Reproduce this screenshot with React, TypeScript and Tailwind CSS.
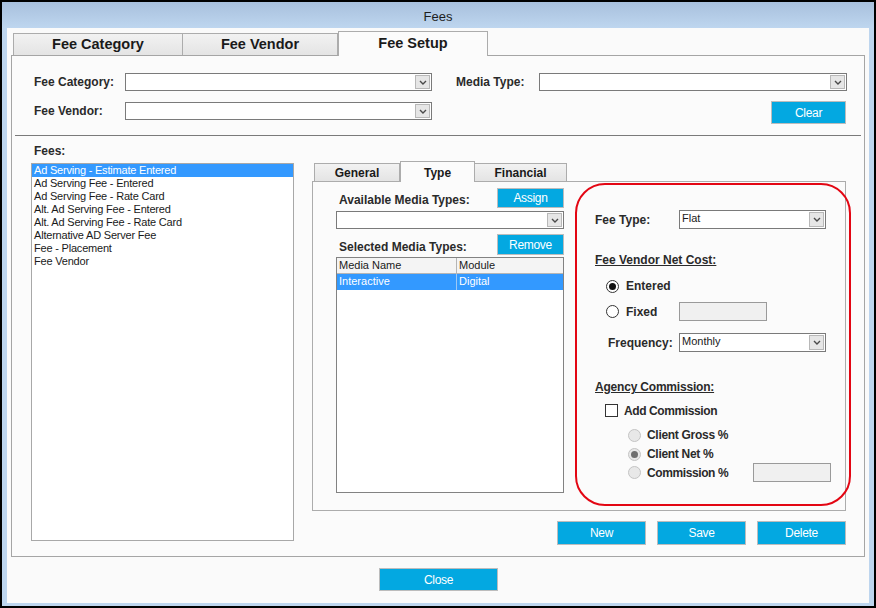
import React from 'react';

const FONT = "font-['Liberation_Sans',Arial,sans-serif]";

function Chevron() {
  return (
    <svg width="8" height="5" viewBox="0 0 8 5">
      <path d="M1 1 L4 4 L7 1" fill="none" stroke="#4a4a4a" strokeWidth="1.4" />
    </svg>
  );
}

function Select({ width, value, height = 18 }: { width: number; value?: string; height?: number }) {
  return (
    <div
      className="flex shrink-0 border border-[#7a7a7a] bg-white"
      style={{ width, height }}
    >
      <span className="flex-1 truncate pl-[2px] text-[11px] leading-[15px] text-[#1a1a1a]">{value}</span>
      <div className="m-px flex w-[15px] items-center justify-center border border-[#b8b8b8] bg-[#e6e6e6]">
        <Chevron />
      </div>
    </div>
  );
}

function BlueButton({ label, width, height }: { label: string; width: number; height: number }) {
  return (
    <div
      className="flex shrink-0 items-center justify-center border border-[#bcbcbc] bg-[#03a8e1] text-[12px] tracking-[-0.3px] text-white"
      style={{ width, height }}
    >
      {label}
    </div>
  );
}

function Radio({ checked, disabled }: { checked?: boolean; disabled?: boolean }) {
  return (
    <div
      className={
        'flex h-[13px] w-[13px] shrink-0 items-center justify-center rounded-full border ' +
        (disabled ? 'border-[#c4c4c4] bg-[#e8e8e8]' : 'border-[#333] bg-white')
      }
    >
      {checked && (
        <div className={'h-[7px] w-[7px] rounded-full ' + (disabled ? 'bg-[#6f6f6f]' : 'bg-[#111]')} />
      )}
    </div>
  );
}

const fees = [
  'Ad Serving - Estimate Entered',
  'Ad Serving Fee - Entered',
  'Ad Serving Fee - Rate Card',
  'Alt. Ad Serving Fee - Entered',
  'Alt. Ad Serving Fee - Rate Card',
  'Alternative AD Server Fee',
  'Fee - Placement',
  'Fee Vendor',
];

const label = 'text-[12px] font-bold leading-[14px] text-[#2a2a2a]';

export default function App() {
  return (
    <div className={`h-[608px] w-[876px] bg-black p-[2px] ${FONT}`}>
      <div className="flex h-full flex-col bg-[#bdd5ee]">
        {/* Title bar */}
        <div className="flex h-[26px] shrink-0 items-center justify-center bg-gradient-to-b from-[#a8c0dd] to-[#bed6ef] pt-[4px] text-[13px] text-[#1e1e1e]">
          Fees
        </div>

        {/* Client area */}
        <div className="mx-[5px] flex h-[575px] flex-col bg-[#fafafa] px-[4px] pt-[3px]">
          {/* Outer tabs */}
          <div className="ml-[2px] flex h-[24px] items-end">
            <div className="flex h-[22px] w-[170px] items-center justify-center border border-b-0 border-[#acacac] bg-gradient-to-b from-[#f2f2f2] to-[#e4e4e4] pt-px text-[14.5px] font-bold text-[#1a1a1a]">
              Fee Category
            </div>
            <div className="flex h-[22px] w-[155px] items-center justify-center border border-b-0 border-l-0 border-[#acacac] bg-gradient-to-b from-[#f2f2f2] to-[#e4e4e4] pt-px text-[14.5px] font-bold text-[#1a1a1a]">
              Fee Vendor
            </div>
            <div className="relative z-10 -mb-px flex h-[25px] w-[150px] items-start justify-center border border-b-0 border-[#acacac] bg-[#fbfbfb] pt-[1px] text-[14.5px] font-bold text-[#1a1a1a]">
              Fee Setup
            </div>
          </div>

          {/* Outer tab page */}
          <div className="flex h-[502px] shrink-0 flex-col border border-[#a5a5a5] bg-[#fbfbfb]">
            <div className="mt-[17px] flex h-[18px] items-center pl-[22px]">
              <span className={`${label} w-[91px]`}>Fee Category:</span>
              <Select width={307} />
              <span className={`${label} ml-[24px] w-[83px]`}>Media Type:</span>
              <Select width={308} />
            </div>
            <div className="mt-[11px] flex h-[18px] items-start pl-[22px] pr-[18px]">
              <span className={`${label} mt-[2px] w-[91px]`}>Fee Vendor:</span>
              <Select width={307} />
              <div className="ml-auto -mt-px">
                <BlueButton label="Clear" width={75} height={23} />
              </div>
            </div>
            <div className="mx-[3px] mt-[15px] h-px bg-[#7a7a7a]" />

            <div className="flex">
              {/* Fees list */}
              <div className="ml-[19px] flex w-[263px] shrink-0 flex-col">
                <span className={`${label} mt-[8px] pl-[3px]`}>Fees:</span>
                <div className="mt-[5px] h-[378px] border border-[#a8a8a8] bg-white">
                  {fees.map((f, i) => (
                    <div
                      key={f}
                      className={
                        'h-[13px] pl-[2px] text-[11px] leading-[13px] tracking-[-0.2px] ' +
                        (i === 0 ? 'bg-[#3399ff] text-white' : 'text-[#1a1a1a]')
                      }
                    >
                      {f}
                    </div>
                  ))}
                </div>
              </div>

              {/* Right side */}
              <div className="ml-[18px] mt-[25px] flex w-[534px] shrink-0 flex-col">
                <div className="ml-[2px] flex h-[20px] items-end">
                  <div className="flex h-[18px] w-[86px] items-center justify-center border border-b-0 border-[#acacac] bg-gradient-to-b from-[#f2f2f2] to-[#e4e4e4] text-[12px] font-bold text-[#1a1a1a]">
                    General
                  </div>
                  <div className="relative z-10 -mb-px flex h-[21px] w-[75px] items-start justify-center border border-b-0 border-[#acacac] bg-[#fbfbfb] pt-[2px] text-[12px] font-bold text-[#1a1a1a]">
                    Type
                  </div>
                  <div className="flex h-[18px] w-[92px] items-center justify-center border border-b-0 border-l-0 border-[#acacac] bg-gradient-to-b from-[#f2f2f2] to-[#e4e4e4] text-[12px] font-bold text-[#1a1a1a]">
                    Financial
                  </div>
                </div>

                {/* Inner tab page */}
                <div className="flex h-[330px] border border-[#acacac] bg-[#fbfbfb]">
                  <div className="ml-[23px] mt-[6px] flex w-[228px] shrink-0 flex-col">
                    <div className="flex h-[20px] items-end justify-between">
                      <span className={`${label} pb-[1px] pl-[3px]`}>Available Media Types:</span>
                      <BlueButton label="Assign" width={67} height={20} />
                    </div>
                    <div className="mt-[3px]">
                      <Select width={228} />
                    </div>
                    <div className="mt-[5px] flex h-[21px] items-end justify-between">
                      <span className={`${label} pb-px pl-[3px]`}>Selected Media Types:</span>
                      <BlueButton label="Remove" width={67} height={21} />
                    </div>
                    <div className="mt-[2px] h-[236px] border border-[#828282] bg-white">
                      <div className="flex h-[16px] border-b border-[#b5b5b5] bg-[#f4f4f4] text-[11px] leading-[15px] text-[#1a1a1a]">
                        <span className="w-[120px] border-r border-[#b5b5b5] pl-[2px]">Media Name</span>
                        <span className="pl-[2px]">Module</span>
                      </div>
                      <div className="flex h-[16px] bg-[#3399ff] text-[11px] leading-[15px] text-white">
                        <span className="w-[120px] border-r border-[#9cc9f5] pl-[2px]">Interactive</span>
                        <span className="pl-[2px]">Digital</span>
                      </div>
                    </div>
                  </div>

                  {/* Highlighted settings */}
                  <div className="ml-[11px] mt-px flex h-[323px] w-[276px] shrink-0 flex-col rounded-[30px] border-2 border-[#e30613]">
                    <div className="mt-[25px] flex h-[19px] items-center pl-[18px]">
                      <span className={`${label} w-[84px]`}>Fee Type:</span>
                      <Select width={147} height={19} value="Flat" />
                    </div>
                    <span className={`${label} mt-[24px] pl-[18px] underline`}>Fee Vendor Net Cost:</span>
                    <div className="mt-[12px] flex h-[14px] items-center pl-[29px]">
                      <Radio checked />
                      <span className={`${label} ml-[7px]`}>Entered</span>
                    </div>
                    <div className="mt-[9px] flex h-[19px] items-center pl-[29px]">
                      <Radio />
                      <span className={`${label} ml-[7px] w-[53px]`}>Fixed</span>
                      <div className="h-[19px] w-[88px] border border-[#9a9a9a] bg-[#f0f0f0]" />
                    </div>
                    <div className="mt-[12px] flex h-[19px] items-center pl-[31px]">
                      <span className={`${label} w-[71px]`}>Frequency:</span>
                      <Select width={147} height={19} value="Monthly" />
                    </div>
                    <span className={`${label} mt-[28px] pl-[18px] underline tracking-[-0.2px]`}>Agency Commission:</span>
                    <div className="mt-[10px] flex h-[13px] items-center pl-[28px]">
                      <div className="h-[13px] w-[13px] border border-[#333] bg-white" />
                      <span className={`${label} ml-[6px] tracking-[-0.4px]`}>Add Commission</span>
                    </div>
                    <div className="mt-[11px] flex h-[14px] items-center pl-[51px]">
                      <Radio disabled />
                      <span className={`${label} ml-[6px] tracking-[-0.3px]`}>Client Gross %</span>
                    </div>
                    <div className="mt-[5px] flex h-[14px] items-center pl-[51px]">
                      <Radio disabled checked />
                      <span className={`${label} ml-[6px] tracking-[-0.3px]`}>Client Net %</span>
                    </div>
                    <div className="mt-[2px] flex h-[19px] items-center pl-[51px]">
                      <Radio disabled />
                      <span className={`${label} ml-[6px] w-[106px] tracking-[-0.4px]`}>Commission %</span>
                      <div className="h-[19px] w-[78px] border border-[#9a9a9a] bg-[#f0f0f0]" />
                    </div>
                  </div>
                </div>

                <div className="mt-[10px] flex justify-end gap-[11px]">
                  <BlueButton label="New" width={89} height={24} />
                  <BlueButton label="Save" width={89} height={24} />
                  <BlueButton label="Delete" width={89} height={24} />
                </div>
              </div>
            </div>
          </div>

          <div className="ml-[368px] mt-[11px]">
            <BlueButton label="Close" width={119} height={23} />
          </div>
        </div>
      </div>
    </div>
  );
}
